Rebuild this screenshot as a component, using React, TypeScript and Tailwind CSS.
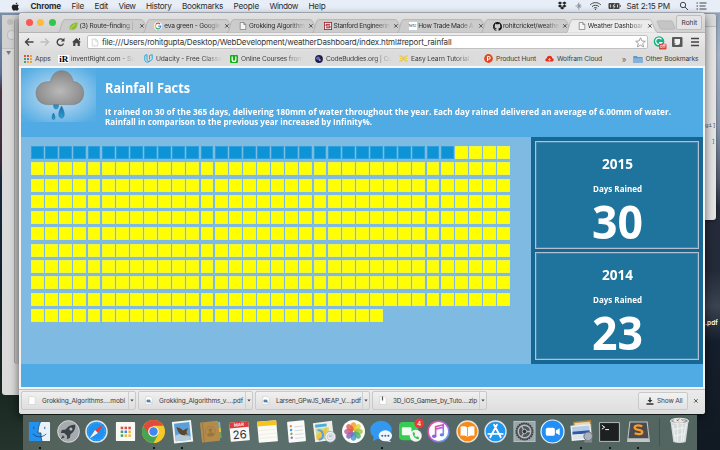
import React, { useLayoutEffect, useRef, useState } from "react";

/**
 * One line of text fitted to `w` pixels: its letters are spread evenly,
 * or, with `condense`, the glyphs themselves are narrowed.
 */
function Fit({ w, className = "", condense = false, children }: { w: number; className?: string; condense?: boolean; children: string }) {
  const ref = useRef<HTMLSpanElement>(null);
  const [natural, setNatural] = useState(w);
  useLayoutEffect(() => {
    if (ref.current) setNatural(ref.current.offsetWidth ? ref.current.getBoundingClientRect().width : w);
  }, [children]);
  const style = condense ? { transform: `scaleX(${w / natural})` } : { letterSpacing: (w - natural) / children.length };
  return (
    <span className={`block shrink-0 whitespace-nowrap ${className}`} style={{ width: w }}>
      <span ref={ref} className="inline-block origin-left align-top" style={style}>{children}</span>
    </span>
  );
}

const fade = "[mask-image:linear-gradient(to_right,black_72%,transparent_100%)]";

/* ---------- small drawings ---------- */

const Doc = ({ className = "h-2 w-2" }: { className?: string }) => (
  <svg viewBox="0 0 8 8" className={className}>
    <path d="M1.2.5h3.6l2 2v5H1.2z M4.8.5v2h2" fill="#f6f6f6" stroke="#777" strokeWidth=".7" />
  </svg>
);

const Cross = () => (
  <svg viewBox="0 0 6 6" className="h-[6px] w-[6px] shrink-0">
    <path d="M1.2 1.2l3.4 3.4M4.6 1.2L1.2 4.6" stroke="#444" strokeWidth=".9" />
  </svg>
);

const Apple = () => (
  <svg viewBox="0 0 24 24" className="h-[9px] w-[9px]" fill="#222">
    <path d="M17 1c.2 3-2.200 5.400-5 5.300C11.800 3.500 14.300 1.200 17 1zM21 17.500c-1 2.600-3 5.500-5 5.500-1.500 0-2.200-1-4-1s-2.500 1-4 1c-2.600 0-6-5.500-6-10 0-4.200 2.700-6.500 5.500-6.500 1.800 0 3.200 1.200 4.500 1.200S15 6.500 17 6.500c1.500 0 3 .7 4 2.200-3.700 2.200-3.200 7.300 0 8.800z" />
  </svg>
);

const Leaf = () => (
  <svg viewBox="0 0 9 9" className="h-[9px] w-[9px]">
    <path d="M.7 8.500C-.4 3.500 3 .5 8.700.5 8.500 5.800 6 8.800 2.300 7.600z" fill="#8fbd2f" />
    <path d="M.7 8.600C2 5.500 3.600 4 6.200 2.500" fill="none" stroke="#d3e89d" strokeWidth=".6" />
  </svg>
);

const Google = () => (
  <svg viewBox="0 0 8 8" className="h-2 w-2">
    <circle cx="4" cy="4" r="4" fill="#fff" />
    <g fill="none" strokeWidth="1.200">
      <path d="M1.800 2.300A2.800 2.800 0 0 1 6 2" stroke="#ea4335" />
      <path d="M1.800 2.300a2.800 2.800 0 0 0 0 3.400" stroke="#fbbc05" />
      <path d="M1.800 5.700A2.800 2.800 0 0 0 5.700 6.200" stroke="#34a853" />
      <path d="M5.700 6.200A2.800 2.800 0 0 0 6.800 4.200H4.200" stroke="#4285f4" />
    </g>
  </svg>
);

const Stanford = () => (
  <svg viewBox="0 0 8 8" className="h-2 w-2">
    <rect x=".4" y=".4" width="7.200" height="7.200" fill="#fff" stroke="#9b1c26" strokeWidth=".8" />
    <path d="M6.200 2.300H2v1.700h4v1.800H1.800" fill="none" stroke="#a3202b" strokeWidth="1" />
  </svg>
);

const Github = () => (
  <svg viewBox="0 0 16 16" className="h-[9px] w-[9px]" fill="#151515">
    <path d="M8 0C3.580 0 0 3.580 0 8c0 3.540 2.290 6.530 5.470 7.590.4.070.55-.17.55-.38 0-.19-.01-.82-.01-1.490-2.010.37-2.530-.49-2.690-.94-.09-.23-.48-.94-.82-1.130-.28-.15-.68-.52-.01-.53.63-.01 1.080.58 1.230.82.72 1.210 1.870.87 2.330.66.07-.52.28-.87.51-1.070-1.780-.2-3.640-.89-3.640-3.950 0-.87.31-1.590.82-2.150-.08-.2-.36-1.020.08-2.120 0 0 .67-.21 2.200.82.64-.18 1.320-.27 2-.27s1.360.09 2 .27c1.530-1.040 2.200-.82 2.200-.82.44 1.100.16 1.920.08 2.120.51.56.82 1.270.82 2.150 0 3.070-1.870 3.750-3.650 3.950.29.25.54.73.54 1.480 0 1.070-.01 1.930-.01 2.200 0 .21.15.46.55.38A8.010 8.010 0 0 0 16 8c0-4.420-3.580-8-8-8z" />
  </svg>
);

const Wsj = () => (
  <span className="flex h-2 w-2 items-center justify-center bg-white font-['Liberation_Serif',serif] text-[4.5px] leading-none text-[#222]">WU</span>
);

/* ---------- tabs ---------- */

const tabs = [
  { icon: <Leaf />, text: "(3) Route-finding |", w: 54 },
  { icon: <Google />, text: "eva green - Google", w: 56 },
  { icon: <Doc />, text: "Grokking Algorithm", w: 56 },
  { icon: <Stanford />, text: "Stanford Engineerin", w: 56 },
  { icon: <Wsj />, text: "How Trade Made A", w: 55 },
  { icon: <Github />, text: "rohitcricket/weathe", w: 56 },
  { icon: <Doc />, text: "Weather Dashboar", w: 55.5 },
];

function Tab({ icon, text, w, active }: { icon: React.ReactNode; text: string; w: number; active: boolean }) {
  return (
    <div className={`relative flex h-[14px] w-[84.7px] shrink-0 items-center ${active ? "z-10" : ""}`}>
      <svg viewBox="0 0 92 14" className="absolute -left-[7px] top-0 h-[14px] w-[92px]">
        <path
          d="M0 14C3 13 3 1.500 6.500.6H83.500C87 1 88 13 92 14z"
          fill={active ? "#ececec" : "#cdcccd"}
          stroke="#aaa9aa"
          strokeWidth=".7"
        />
        {active && <path d="M1 13.900h90" stroke="#ececec" strokeWidth=".8" />}
      </svg>
      <div className="relative ml-[4px] flex w-[9.500px] justify-center">{icon}</div>
      <div className={`relative ml-[1px] w-[57px] overflow-hidden ${fade}`}>
        <Fit w={w} className="text-[6.600px] leading-[10px] text-[#2b2b2b]">{text}</Fit>
      </div>
      <div className="relative ml-[2.500px]"><Cross /></div>
    </div>
  );
}

/* ---------- bookmarks ---------- */

const bookmarks = [
  {
    slot: "w-[36px]", w: 15.5, text: "Apps", cut: false,
    icon: (
      <svg viewBox="0 0 8 8" className="h-2 w-2">
        {["#e8483f", "#e8483f", "#e9a13b", "#48a25c", "#4588dc", "#e9a13b", "#48a25c", "#e9a13b", "#e9a13b"].map((c, i) => (
          <rect key={i} x={(i % 3) * 3} y={Math.floor(i / 3) * 3} width="2" height="2" fill={c} />
        ))}
      </svg>
    ),
  },
  {
    slot: "w-[85px]", w: 64, text: "inventRight.com - Su", cut: true,
    icon: <span className="bg-white px-px font-['Liberation_Serif',serif] text-[9px] font-bold leading-[8px] text-black">iR</span>,
  },
  {
    slot: "w-[85px]", w: 66, text: "Udacity - Free Classe", cut: true,
    icon: (
      <svg viewBox="0 0 9 9" className="h-[9px] w-[9px]" fill="none" stroke="#27a9db" strokeWidth="1">
        <path d="M.8 1.500L3 .6v4.800C3 7.500 5 8 6 7L3.800 8.200C2 8.500.8 7.500.8 5.500z M5.500 1.500L8.200.7v4.800L6 7 M5.500 1.500v4" />
      </svg>
    ),
  },
  {
    slot: "w-[85px]", w: 62, text: "Online Courses from", cut: true,
    icon: (
      <svg viewBox="0 0 8 8" className="h-2 w-2">
        <rect width="8" height="8" rx="1" fill="#12b312" />
        <path d="M2.200 1.500v3c0 2.600 3.600 2.600 3.600 0v-3" fill="none" stroke="#fff" strokeWidth="1.300" />
      </svg>
    ),
  },
  {
    slot: "w-[85px]", w: 66, text: "CodeBuddies.org | Co", cut: true,
    icon: (
      <svg viewBox="0 0 8 8" className="h-2 w-2">
        <circle cx="4" cy="4" r="3.900" fill="#202044" />
        <circle cx="3" cy="3.300" r="1.800" fill="#6664cd" />
        <circle cx="4.800" cy="5" r="1" fill="#a79ce5" />
      </svg>
    ),
  },
  {
    slot: "w-[85px]", w: 62, text: "Easy Learn Tutorial |", cut: true,
    icon: (
      <svg viewBox="0 0 9 7" className="h-[7px] w-[9px]" fill="none" stroke="#f2c51f" strokeWidth="1.200">
        <path d="M.2 1h2L4.500 3.300 7 1h1.800M.2 6h2L4.500 3.800 7 6h1.800M1 3.500h1.500M6.600 3.500h1.500" />
      </svg>
    ),
  },
  {
    slot: "w-[61px]", w: 40, text: "Product Hunt", cut: false,
    icon: (
      <svg viewBox="0 0 9 9" className="h-[9px] w-[9px]">
        <circle cx="4.500" cy="4.500" r="4.400" fill="#df4b26" />
        <path d="M3.500 7V2.500h1.400a1.300 1.300 0 0 1 0 2.700H3.500" fill="none" stroke="#fff" strokeWidth="1" />
      </svg>
    ),
  },
  {
    slot: "w-[60px]", w: 45, text: "Wolfram Cloud", cut: false,
    icon: (
      <svg viewBox="0 0 9 7" className="h-[7px] w-[9px]">
        <path d="M2 6.500C-.5 6 .2 3.500 1.800 3.300 2 0 7 0 7.200 3.200 9.300 3.500 9.300 6.200 7.200 6.500z" fill="#e0321f" />
        <path d="M4.500 3v3M3 4.500h3" stroke="#ffd5cf" strokeWidth=".7" />
      </svg>
    ),
  },
];

/* ---------- page ---------- */

const DAYS = 365;
const RAINY = 30;

const Cloud = () => (
  <svg viewBox="0 0 75 54" className="h-[54px] w-[75px] shrink-0">
    <defs>
      <radialGradient id="glow" cx=".5" cy=".5" r=".62">
        <stop offset="0" stopColor="#c3e0f3" />
        <stop offset=".5" stopColor="#93c8ec" />
        <stop offset="1" stopColor="#56ade4" />
      </radialGradient>
      <radialGradient id="cloud" cx=".5" cy=".6" r=".6">
        <stop offset="0" stopColor="#b9b9b9" />
        <stop offset="1" stopColor="#858585" />
      </radialGradient>
      <linearGradient id="drop" x1="0" y1="0" x2="0" y2="1">
        <stop offset="0" stopColor="#1b6f9f" />
        <stop offset="1" stopColor="#2ba0d8" />
      </linearGradient>
    </defs>
    <rect width="75" height="54" fill="url(#glow)" />
    <g fill="url(#drop)" stroke="#12608c" strokeWidth=".4">
      <path d="M35 31c-3 4-3.400 10 0 10s3.400-6 0-10z" />
      <path d="M40.500 38c-4.300 7.500-3 12 0 12s4.300-4.500 0-12z" />
      <path d="M32.500 45c-2.300 4-1.700 6.500 0 6.500s2.300-2.500 0-6.500z" />
    </g>
    <path d="M26.500 36.600h25c15-.6 14.500-22.100.7-23C50-.9 31.500-1.200 29.500 13.800 11 12 10.500 36 26.500 36.600z" fill="url(#cloud)" stroke="#747474" strokeWidth=".5" />
  </svg>
);

function YearCard({ year, days }: { year: string; days: string }) {
  return (
    <div className="flex h-[108px] flex-col items-center border border-[#b3c0d3] bg-[#1e749d] outline outline-1 -outline-offset-[2px] outline-[#4585ab]">
      <Fit condense w={31} className="mt-[13px] text-[14px] font-bold leading-[18px]">{year}</Fit>
      <Fit condense w={49} className="mt-[9px] text-[9px] font-bold leading-[14px]">Days Rained</Fit>
      <Fit condense w={51} className="text-[47px] font-bold leading-[50px]">{days}</Fit>
    </div>
  );
}

function WeatherPage() {
  return (
    <div className="mx-[2px] h-[319px] bg-[#50aae4] font-['Open_Sans','Noto_Sans',sans-serif] text-white">
      <header className="flex h-[69px]">
        <Cloud />
        <div className="ml-[9px] pt-[10px]">
          <Fit condense w={85} className="text-[14px] font-bold leading-[19px]">Rainfall Facts</Fit>
          <div className="mt-[9.500px] text-[9px] font-bold leading-[10.500px]">
            <Fit condense w={566}>It rained on 30 of the 365 days, delivering 180mm of water throughout the year. Each day rained delivered an average of 6.00mm of water.</Fit>
            <Fit condense w={267}>Rainfall in comparison to the previous year increased by Infinity%.</Fit>
          </div>
        </div>
      </header>
      <div className="flex h-[227px]">
        <div className="w-[510px] bg-[#7fbae2] pl-[10px] pt-[9px]">
          <div className="grid w-[481px] auto-rows-[16.300px] grid-cols-[repeat(34,14.140px)]">
            {Array.from({ length: DAYS }, (_, i) => (
              <div
                key={i}
                className={i < RAINY ? "h-[13px] w-[12.900px] border border-[#2f9fda] bg-[#0d94d6]" : "h-[13px] w-[12.900px] border border-[#f0f63c] bg-[#ffff00]"}
              />
            ))}
          </div>
        </div>
        <div className="flex flex-1 flex-col gap-[3px] bg-[#166893] px-[4px] pt-[4px]">
          <YearCard year="2015" days="30" />
          <YearCard year="2014" days="23" />
        </div>
      </div>
    </div>
  );
}

/* ---------- downloads ---------- */

const PdfIcon = () => (
  <svg viewBox="0 0 8 9" className="h-[9px] w-2">
    <path d="M.8.500h4.400l2 2v6H.8z" fill="#fff" stroke="#c4c4c4" strokeWidth=".5" />
    <path d="M2 4h3v2H2zM4.500 5.500l2 1.500" fill="#5c87b8" stroke="#54779c" strokeWidth=".7" />
  </svg>
);

const downloads = [
  { text: "Grokking_Algorithms....mobi", w: 83, icon: <svg viewBox="0 0 8 9" className="h-[9px] w-2"><path d="M.8.500h4.400l2 2v6H.8z" fill="#fff" stroke="#c4c4c4" strokeWidth=".5" /></svg> },
  { text: "Grokking_Algorithms_v....pdf", w: 84, icon: <PdfIcon /> },
  { text: "Larsen_GPwJS_MEAP_V....pdf", w: 85, icon: <PdfIcon /> },
  { text: "3D_iOS_Games_by_Tuto....zip", w: 84, icon: <svg viewBox="0 0 8 9" className="h-[9px] w-2"><path d="M.8.500h4.400l2 2v6H.8z" fill="#fff" stroke="#c4c4c4" strokeWidth=".5" /><path d="M3.500.5v4" stroke="#555" strokeWidth="1.200" /></svg> },
];

/* ---------- dock ---------- */

const Card = ({ children }: { children?: React.ReactNode }) => (
  <>
    <rect x="2" y="2" width="20" height="20" rx="1" fill="#f8f8f5" />
    {children}
  </>
);

const dockIcons: { art: React.ReactNode; dot?: boolean }[] = [
  { dot: true, art: <>
    <rect x="1" y="2" width="22" height="20" rx="1" fill="#e9f1f9" />
    <path d="M1 2h12C11 6 10.500 10 10.500 13.500h3c0 3 .3 6 1 8.500H1z" fill="#2391ee" />
    <path d="M6 7v2.500M17.500 7v2.500M5 14.500c4 4 10 4 14 0M13 2c-2 4-2.500 8-2.500 11.500h3c0 3 .3 6 1 8.500" fill="none" stroke="#164170" strokeWidth=".8" /></> },
  { art: <>
    <circle cx="12" cy="12" r="11.300" fill="#a5abae" stroke="#dadddf" strokeWidth="1" />
    <path d="M19 5c-5-.5-8 2-10 5l-4 .5-1 3 3.500 0 3 3 0 3.500 3-1.500.5-3.500c3-2 5.500-5 5-10zM6 16l-2 4 4-2z" fill="#3d4246" /><circle cx="14.500" cy="9.500" r="1.600" fill="#b6bbc0" /></> },
  { art: <>
    <circle cx="12" cy="12" r="11" fill="#1f91ee" stroke="#e2e6ea" strokeWidth="1.500" />
    <circle cx="12" cy="12" r="8.800" fill="none" stroke="#80c6fa" strokeWidth="1" strokeDasharray=".5 1.300" />
    <path d="M19.500 4.500l-6 9-3-3z" fill="#ee3d34" /><path d="M4.500 19.500l6-9 3 3z" fill="#f4f4f4" /></> },
  { art: <Card>{["#e6473f", "#e6473f", "#e6473f", "#43a35a", "#4285f4", "#f2b632", "#43a35a", "#f2b632", "#f2b632"].map((c, i) => (
    <rect key={i} x={7 + (i % 3) * 4} y={7 + Math.floor(i / 3) * 4} width="2.600" height="2.600" fill={c} />))}</Card> },
  { dot: true, art: <>
    <circle cx="12" cy="12" r="12" fill="#f7c928" />
    <path d="M12 12L1.600 6A12 12 0 0 1 22.400 6H12z" fill="#e24a3c" />
    <path d="M1.600 6A12 12 0 0 0 12 24l5-9-5-3z" fill="#45a651" />
    <path d="M1.600 6L7 15l5-9z" fill="#e24a3c" />
    <circle cx="12" cy="12" r="5.600" fill="#f5f5f5" /><circle cx="12" cy="12" r="4.400" fill="#4286ee" /></> },
  { dot: true, art: <g transform="rotate(-6 12 12)">
    <rect x="2" y="1" width="20" height="22.500" fill="#f3f3f1" /><rect x="4" y="3" width="16" height="18.500" fill="#5b9fd8" />
    <path d="M4 16c5-3 10-1 16 2v3.500H4z" fill="#b4cbdb" />
    <path d="M6 7c4 1 5 2 6.500 4L18 9l-2 4 1 4-4-1c-3.500 0-5.500-3-7-9z" fill="#5c462f" /><path d="M15 15l3 2.500-4-1z" fill="#e7b43d" /></g> },
  { art: <g transform="rotate(-6 12 12)">
    <rect x="19" y="3" width="4" height="6" fill="#74b7d2" /><rect x="19" y="9" width="4" height="5" fill="#e3c04d" /><rect x="19" y="14" width="4" height="6" fill="#72a64e" />
    <rect x="2" y="1.500" width="19" height="21" rx="1" fill="#b38b4c" />
    <path d="M4.500 2v20" stroke="#8f6b34" strokeWidth=".6" /><circle cx="12" cy="12" r="5.300" fill="none" stroke="#a07a3c" strokeWidth=".7" />
    <circle cx="12" cy="10.500" r="2" fill="#9a763d" /><path d="M8 15.500c1-3.500 7-3.500 8 0-2 2-6 2-8 0z" fill="#9a763d" /></g> },
  { art: <g transform="rotate(-5 12 12)"><rect x="2" y="2" width="20" height="20" rx="1" fill="#f8f8f8" /><path d="M2 2h20v6H2z" fill="#dc3c3c" />
    <text x="12" y="6.500" fontSize="4.500" fontWeight="600" textAnchor="middle" fill="#fff">MAR</text>
    <text x="12" y="19.500" fontSize="12" textAnchor="middle" fill="#333">26</text></g> },
  { art: <g transform="rotate(-5 12 12)"><rect x="2" y="1" width="20" height="22" rx=".5" fill="#fbfaf4" /><path d="M2 1h20v5H2z" fill="#f5c51e" /><path d="M2 10.500h20M2 14.500h20M2 18.500h20" stroke="#e2e1da" strokeWidth=".5" /></g> },
  { art: <g transform="rotate(-5 12 12)"><rect x="3" y="1" width="18" height="22" rx="1" fill="#fafafa" />
    {["#f28a2e", "#3d9be8", "#61bd45", "#b15cd6"].map((c, i) => <g key={c}><circle cx="6.500" cy={6 + i * 4} r="1.300" fill={c} /><path d={`M10 ${7 + i * 4}h9`} stroke="#bbb" strokeWidth=".5" /></g>)}</g> },
  { art: <><g transform="rotate(-7 11 12)"><rect x="1" y="2" width="20" height="20" fill="#f0eee3" />
    <path d="M3 4h12v3H3z" fill="#4da9de" /><path d="M3 8h14v12H3z" fill="#c7df9d" /><path d="M3 15l12-7v4L7 20H3z" fill="#f4c23d" /><path d="M5 10q5 0 5 5t-5 5" fill="none" stroke="#5d9edb" strokeWidth="2" /></g>
    <circle cx="18" cy="17.500" r="5.600" fill="#edf0f2" stroke="#9caab4" strokeWidth=".8" /><circle cx="18" cy="17.500" r="3.200" fill="none" stroke="#b3bec8" strokeWidth=".7" /><path d="M16.500 17.500h3M16.500 16.500h3" stroke="#8191a0" strokeWidth=".6" /></> },
  { art: <><circle cx="12" cy="12" r="12" fill="#fbfbf8" />
    {["#f29b26", "#e9d12d", "#9bc83c", "#4dad69", "#3e9bd1", "#7668bd", "#c158a0", "#e85947"].map((c, i) => (
      <ellipse key={c} cx="12" cy="6.800" rx="3" ry="4.500" fill={c} opacity=".82" transform={`rotate(${i * 45} 12 12)`} />))}</> },
  { dot: true, art: <>
    <ellipse cx="11.500" cy="10.500" rx="11.300" ry="9.800" fill="#3298f2" /><path d="M4 17l-1 5 6-3z" fill="#3298f2" />
    <ellipse cx="16" cy="16.500" rx="7" ry="5.800" fill="#f2f7fd" /><path d="M19 20l3 3-6-1z" fill="#f2f7fd" />
    <g fill="#2868b4"><circle cx="12.800" cy="16.500" r="1.100" /><circle cx="16" cy="16.500" r="1.100" /><circle cx="19.200" cy="16.500" r="1.100" /></g></> },
  { art: <>
    <rect y="2" width="20" height="19" rx="4" fill="#39cc52" /><rect x="3" y="7.500" width="10" height="8.500" rx="1.500" fill="#f0fff2" />
    <circle cx="17.500" cy="16.500" r="6.300" fill="#f4f4f4" />
    <path d="M14.500 13c-1 3 3 7.500 6 7l.6-1.500-2-1.500-1 .8c-1-.5-1.500-1.200-2-2.200l.8-1-1.200-2z" fill="#37c34d" />
    <circle cx="21" cy="3.500" r="5" fill="#ee3738" /><text x="21" y="6" textAnchor="middle" fontSize="7" fill="#fff">4</text></> },
  { art: <><circle cx="12" cy="12" r="10.800" fill="#fff" stroke="url(#ring)" strokeWidth="1.600" />
    <path d="M9 17V7l8-2v10M9 9.500l8-2" fill="none" stroke="url(#ring)" strokeWidth="1.700" /><ellipse cx="7.500" cy="17" rx="2.300" ry="1.800" fill="#8b62dc" /><ellipse cx="15.500" cy="15.500" rx="2.300" ry="1.800" fill="#6c7ce6" /></> },
  { art: <><circle cx="12" cy="12" r="11" fill="#f98a18" stroke="#e9e4dc" strokeWidth="1.400" />
    <path d="M12 8C10 6.500 7 6.300 4.800 7v9.500c2.500-.6 5-.3 7.200 1 2.200-1.300 4.700-1.600 7.200-1V7C17 6.300 14 6.500 12 8z" fill="#fff" /><path d="M12 8v9" stroke="#f98a18" strokeWidth=".9" /></> },
  { art: <><circle cx="12" cy="12" r="11" fill="#2297f0" stroke="#dbe4ec" strokeWidth="1.500" />
    <path d="M13.500 5L6.500 18M10.500 5l7 13M4.500 14.500h15" stroke="#fff" strokeWidth="1.900" strokeLinecap="round" /></> },
  { art: <><rect x=".5" y="1" width="23" height="22" fill="#b6c0c6" /><rect x="1.500" y="2" width="21" height="20" fill="#9ba5ab" />
    <circle cx="12" cy="12" r="8.800" fill="#515659" stroke="#35393c" strokeWidth="1.200" strokeDasharray="1.500 1" />
    <circle cx="12" cy="12" r="6.500" fill="none" stroke="#b7bcc0" strokeWidth="1.400" /><path d="M12 12h6M12 12l-3 5.500M12 12L9 6.500" stroke="#b7bcc0" strokeWidth="1.400" /><circle cx="12" cy="12" r="2.300" fill="#303437" stroke="#b7bcc0" /></> },
  { art: <><circle cx="12" cy="12" r="12" fill="#218ff6" stroke="#ecf2f8" strokeWidth="1.300" />
    <rect x="5" y="8" width="9.500" height="8.500" rx="2" fill="#fff" /><path d="M15.500 11l4-2.500v7.500l-4-2.500z" fill="#fff" /></> },
  { dot: true, art: <><g transform="rotate(-5 12 12)"><rect x="4" y="1" width="19" height="15" fill="#b08342" /><rect x="5.500" y="2.500" width="16" height="3" fill="#e5d8b4" /><rect x="1" y="5" width="21" height="16" fill="#eef2f4" /><rect x="2.500" y="6.500" width="18" height="6" fill="#b3cdea" /><path d="M2.500 11.500h18v3h-18z" fill="#2f59a8" /><path d="M2.500 14.500h18v5h-18z" fill="#dce5ea" /></g>
    <circle cx="19" cy="17" r="4.500" fill="#aab3bb" stroke="#676d72" /><path d="M15 21h8v2.500h-8z" fill="#84898c" /></> },
  { dot: true, art: <><rect x="1" y="2" width="22" height="21" rx="1" fill="#a9b0b1" /><rect x="2.200" y="3.200" width="19.600" height="18.600" fill="#1c2022" />
    <path d="M4 5.500l3 2-3 2M7.500 10h4" fill="none" stroke="#fff" strokeWidth="1" /></> },
  { dot: true, art: <><path d="M2.500 1.500h19L24 23H0z" fill="#c1c6c8" /><path d="M3.500 2.500h17l2 16.500h-21z" fill="#4b4b4d" />
    <path d="M16 6.500c-5-1.500-8-1-8 1.500 0 3 8 1.500 8 4.500 0 2.500-4 2.800-8 1.300" fill="none" stroke="#f79a32" strokeWidth="2.400" /></> },
];

const menus: [string, number, string][] = [
  ["Chrome", 30.5, "font-bold"], ["File", 12.5, ""], ["Edit", 13.5, ""], ["View", 17, ""], ["History", 25.5, ""],
  ["Bookmarks", 41, ""], ["People", 25.5, ""], ["Window", 28.5, ""], ["Help", 17, ""],
];

export default function App() {
  return (
    <div className="relative h-[450px] w-[720px] overflow-hidden bg-[linear-gradient(to_bottom,#8294ac_0%,#5c7397_16%,#4a3444_20%,#3b2a3c_36%,#172842_40%,#14222e_62%,#17251f_85%,#25352d_100%)] font-['Inter','Noto_Sans',sans-serif] text-[#333]">
      {/* wallpaper on the right */}
      <div className="absolute right-0 top-0 h-full w-[24px] bg-[linear-gradient(to_bottom,#8a9bb2_0%,#a5b4c6_12%,#8592a8_28%,#4e5768_40%,#252b3a_46%,#232a38_60%,#3a4350_68%,#151e2c_76%,#111a22_100%)]" />
      <span className="absolute left-[705px] top-[319px] text-[6.500px] font-semibold leading-[8px] text-white">.pdf</span>

      {/* background windows */}
      <div className="absolute left-[2px] top-[15px] h-[380px] w-[30px] rounded-[3px] bg-[#dadada]">
        <div className="flex h-[34px] flex-col gap-[5px] border-b border-[#c0c0c0] bg-[#d0d0d0] pl-[5px] pt-[4px]">
          <div className="h-[6px] w-[6px] rounded-full bg-[#bcbcbc]" />
          <div className="h-[10px] w-[9px] rounded-sm border border-[#bbb] bg-[#d9d9d9]" />
        </div>
        <div className="pl-[4px] text-[5px] leading-[8px] text-[#777]">▼</div>
      </div>
      <div className="absolute left-[14px] top-[19px] h-[345px] w-[20px] rounded-[3px] border-l border-[#a4a4a4] bg-[#c4c4c4]" />
      <div className="absolute left-[690px] top-[14px] h-[206px] w-[26px] rounded-[3px] bg-[#e4e4e4] font-['Liberation_Mono',monospace] text-[6px] text-[#555] shadow-[0_1px_3px_#0006]">
        <div className="h-[13px] rounded-t-[3px] border-b border-[#bbb] bg-[#dadada]" />
        <div className="pl-[15px] pt-[95px] leading-[8px]">gi]</div>
        <div className="pr-px pt-[8px] text-right leading-[8px]">]</div>
      </div>

      {/* menu bar */}
      <div className="absolute left-0 top-0 flex h-[13px] w-full items-center border-b border-[#b5bdc9] bg-[#e8eef7] text-[8.200px] leading-[12px] text-[#2c2c2c]">
        <div className="ml-[11px] w-[19.500px]"><Apple /></div>
        <div className="flex gap-[10.500px]">
          {menus.map(([text, w, cls]) => <Fit key={text} w={w} className={cls}>{text}</Fit>)}
        </div>
        <svg viewBox="0 0 64 12" className="ml-[231px] h-[12px] w-[64px]">
          <path d="M3 1.500L5.200 3 3 4.500.8 3zM7.400 1.500L9.600 3 7.400 4.500 5.200 3zM3 4.500L5.200 6 3 7.500.8 6zM7.400 4.500L9.600 6 7.400 7.500 5.200 6zM5.200 6.600l2.200 1.500-2.200 1.500L3 8.100z" fill="#222" />
          <path d="M18.500 6h6M20.500 4l3 4M23.500 4l-3 4M21.800 2.500v7" stroke="#8b9098" strokeWidth=".9" />
          <g fill="none" stroke="#444" strokeWidth="1"><path d="M33.200 4.800c3-2.900 7.600-2.900 10.600 0M35 6.600c2-1.800 5-1.800 7 0M36.800 8.200c1-.9 2.400-.9 3.400 0" /></g><circle cx="38.500" cy="9.300" r=".7" fill="#444" />
          <rect x="51.500" y="3" width="11" height="6" rx="1" fill="#444" /><path d="M63.200 5v2" stroke="#444" /><path d="M53.500 4.500v3M60.500 4.500v3M58 3.500L56 6.200h2L56.500 8.500" fill="none" stroke="#eee" strokeWidth=".8" />
        </svg>
        <Fit w={43.5} className="ml-[6px]">Sat 2:15 PM</Fit>
        <svg viewBox="0 0 28 10" className="ml-[9px] h-[10px] w-[28px]" fill="none" stroke="#333" strokeWidth=".9">
          <circle cx="4" cy="4" r="2.700" /><path d="M6 6l3 3M17.500 2h1.500M17.500 5h1.500M17.500 8h1.500M20.500 2h7M20.500 5h6M20.500 8h7" />
        </svg>
      </div>

      {/* browser window */}
      <main className="absolute left-[19px] top-[13px] h-[400.500px] w-[686px] overflow-hidden rounded-[3px] bg-[#f3f3f3] shadow-[0_3px_10px_#0009]">
        <div className="flex h-[20px] items-end border-b border-[#b4b4b4] bg-[linear-gradient(#e2e2e2,#d2d1d2)]">
          <div className="mb-[6px] ml-[7px] flex w-[39px] gap-[4.300px]">
            <i className="h-[7px] w-[7px] rounded-full bg-[#fc5753]" />
            <i className="h-[7px] w-[7px] rounded-full bg-[#fdbc40]" />
            <i className="h-[7px] w-[7px] rounded-full bg-[#33c748]" />
          </div>
          <div className="-mb-px flex">
            {tabs.map((t, i) => <Tab key={t.text} {...t} active={i === 6} />)}
          </div>
          <svg viewBox="0 0 20 10" className="-ml-[2px] mb-[2px] h-[10px] w-[20px]"><path d="M1 1.500Q1.500.8 3 .8h11.500q1.500 0 2 1l2.300 6q.3 1.400-1.300 1.400H6q-1.500 0-2-1z" fill="#c6c5c6" stroke="#adadad" strokeWidth=".6" /></svg>
          <div className="mb-[2px] ml-[.5px] flex h-[15px] w-[26px] items-center justify-center rounded-[2px] border border-[#bdbdbd] bg-[#e4e4e4]">
            <Fit w={15.5} className="text-[6.600px] leading-[8px]">Rohit</Fit>
          </div>
        </div>

        <div className="flex h-[18px] items-center bg-[linear-gradient(#ececec,#dedede)]">
          <svg viewBox="0 0 60 12" className="ml-[5px] h-[12px] w-[60px] shrink-0" fill="none" stroke="#444" strokeWidth="1.400">
            <path d="M9.500 6H2M5 2.500L1.500 6 5 9.500" />
            <path d="M16.500 6H24M21 2.500L24.500 6 21 9.500" stroke="#bebebe" />
            <path d="M39 4a3.300 3.300 0 1 0 .5 3.500" /><path d="M40.500 1.800v3.700h-3.700z" fill="#444" stroke="none" />
            <path d="M48 6.300L52.500 2 57 6.300h-1.200V10h-2.200V7.300h-2.200V10h-2.200V6.300z" fill="#444" stroke="none" /><path d="M55.500 2v2" strokeWidth="1" />
          </svg>
          <div className="ml-[3px] flex h-[14.500px] w-[561px] items-center rounded-[2px] border border-[#c0c0c0] bg-white">
            <Doc className="ml-[3px] h-[9px] w-[8px] opacity-40" />
            <Fit w={349.5} className="ml-[3px] text-[8px] leading-[12px] text-[#333]">file:///Users/rohitgupta/Desktop/WebDevelopment/weatherDashboard/index.html#report_rainfall</Fit>
            <svg viewBox="0 0 10 10" className="ml-auto mr-[1px] h-[11px] w-[11px]"><path d="M5 .7l1.300 2.900 3.100.3-2.400 2 .8 3.100L5 7.400 2.200 9 3 5.900.6 3.900l3.100-.3z" fill="none" stroke="#888" strokeWidth=".7" /></svg>
          </div>
          <svg viewBox="0 0 52 16" className="h-[16px] w-[52px]">
            <circle cx="11" cy="7.500" r="5.300" fill="#15b384" /><path d="M13.500 5.400a3.200 3.200 0 1 0 .3 3.200H11" fill="none" stroke="#fff" strokeWidth="1.200" />
            <rect x="11" y="9.800" width="7.500" height="5.600" rx="1" fill="#d5483d" /><text x="14.750" y="14.200" fontSize="4.800" textAnchor="middle" fill="#fff">off</text>
            <rect x="24" y="3" width="10.500" height="10" rx="1" fill="#58595b" /><path d="M26.500 5h5.500v3.500q0 2.500-2.800 2.500h-2.700z" fill="#f2f2f2" /><path d="M26.500 11V9.500h1.500z" fill="#333" />
            <path d="M43 4.500h8M43 8h8M43 11.500h8" stroke="#444" strokeWidth="1.500" />
          </svg>
        </div>

        <div className="flex h-[15px] items-center bg-[#dcdcdc] pl-[4px] text-[6.700px] leading-[10px] text-[#3c3c3c]">
          {bookmarks.map((b) => (
            <div key={b.text} className={`flex shrink-0 items-center ${b.slot}`}>
              <div className="mr-[2.500px] flex w-[9.500px] shrink-0 justify-center">{b.icon}</div>
              <div className={b.cut ? fade : ""}><Fit w={b.w}>{b.text}</Fit></div>
            </div>
          ))}
          <span className="ml-auto text-[8px] text-[#666]">»</span>
          <svg viewBox="0 0 10 8" className="ml-[6px] h-[8px] w-[10px]"><path d="M.3 1h3.500l.8 1h5v5.700H.3z" fill="#6496c5" /><path d="M.3 3.200h9.300v4.500H.3z" fill="#86b2da" /></svg>
          <Fit w={53} className="ml-[3px] mr-[6.500px]">Other Bookmarks</Fit>
        </div>
        <div className="h-[2px] bg-[#f4f8fb]" />

        <WeatherPage />

        <div className="mt-[1.500px] flex h-[25px] items-center gap-[2px] border-t border-[#bcbcbc] bg-[linear-gradient(#ebebeb,#dedede)] pb-[2px] pl-[2px] text-[6.500px] leading-[10px] text-[#3c3c3c]">
          {downloads.map((d) => (
            <div key={d.text} className="flex h-[19px] w-[115px] shrink-0 items-center rounded-[2px] border border-[#c9c9c9] bg-[linear-gradient(#f0f0f0,#dedede)]">
              <div className="ml-[6px] mr-[6px]">{d.icon}</div>
              <Fit w={d.w}>{d.text}</Fit>
              <div className="ml-auto flex h-full w-[7px] items-center justify-center border-l border-[#cfcfcf]">
                <svg viewBox="0 0 4 3" className="h-[3px] w-[4px]"><path d="M.3.500h3.400L2 2.500z" fill="#444" /></svg>
              </div>
            </div>
          ))}
          <div className="ml-auto flex h-[18px] w-[50px] items-center rounded-[2px] border border-[#c9c9c9] bg-[linear-gradient(#f2f2f2,#e2e2e2)] pl-[7px]">
            <svg viewBox="0 0 8 8" className="mr-[3px] h-2 w-2"><path d="M4 .5v3M.5 7h7" stroke="#333" strokeWidth="1.400" /><path d="M1.500 3h5L4 5.700z" fill="#333" /></svg>
            <Fit w={25.5}>Show All</Fit>
          </div>
          <div className="ml-[3px] mr-[6px]"><Cross /></div>
        </div>
      </main>

      {/* dock */}
      <div className="absolute left-[23px] top-[415px] flex h-[35px] w-[674px] bg-[linear-gradient(to_right,#526059,#5b6f6c_35%,#526766_65%,#54655f)] pl-[2.250px]">
        <svg className="absolute h-0 w-0"><defs><linearGradient id="ring" x1="0" y1="0" x2="1" y2="1"><stop offset="0" stopColor="#f44e8c" /><stop offset=".5" stopColor="#b55ddd" /><stop offset="1" stopColor="#48b8f3" /></linearGradient></defs></svg>
        {dockIcons.map((d, i) => (
          <div key={i} className="flex w-[28.500px] shrink-0 flex-col items-center pt-[4.500px]">
            <svg viewBox="0 0 24 24" className="h-[23px] w-[23px] overflow-visible">{d.art}</svg>
            {d.dot && <i className="mt-[4px] h-[2px] w-[2px] rounded-full bg-black" />}
          </div>
        ))}
        <div className="ml-[7px] mt-[3px] h-[28px] w-px bg-[#43524f]" />
        <svg viewBox="0 0 22 28" className="ml-[9px] mt-[2px] h-[27px] w-[21px]">
          <path d="M1.500 4h19L17.500 26q-6.500 2-13 0z" fill="#d4d8d9" />
          <path d="M4 8l3 17M9 7v19M14 8l-1 18M18 7l-3 18M4 13l12-2M5 20l12-3" stroke="#f1f4f4" strokeWidth="1.500" opacity=".8" />
          <ellipse cx="11" cy="4" rx="9.500" ry="2.800" fill="#919c9f" stroke="#eceeee" />
          <path d="M4 4l3-3 3 2 3-2 4 3-3 2H7z" fill="#e7e8e5" /><path d="M8 3l2 1M13 2l2 2" stroke="#b54d3b" />
        </svg>
      </div>
    </div>
  );
}
